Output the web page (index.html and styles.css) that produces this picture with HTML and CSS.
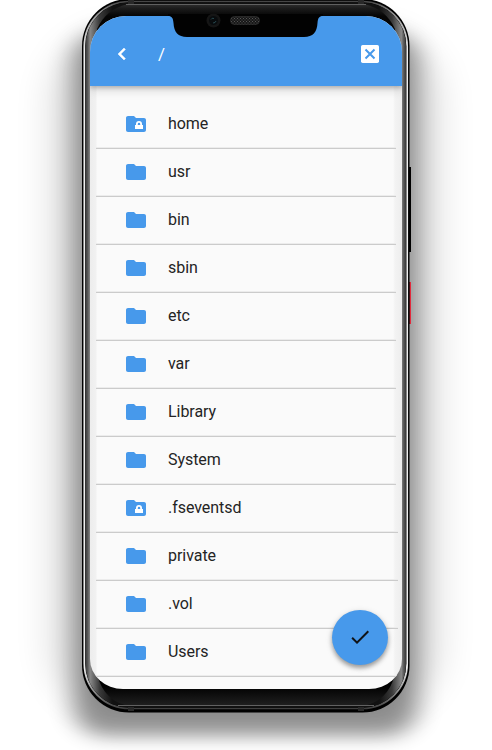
FILE: index.html
```html
<!DOCTYPE html>
<html lang="en">
<head>
<meta charset="utf-8">
<title>Files</title>
<link rel="stylesheet" href="styles.css">
</head>
<body>
<svg width="0" height="0" class="defs">
  <symbol id="folder" viewBox="0 0 24 24"><path d="M10 4H4c-1.100 0-2 .9-2 2v12c0 1.100.9 2 2 2h16c1.100 0 2-.9 2-2V8c0-1.100-.9-2-2-2h-8z"/></symbol>
  <symbol id="lock" viewBox="0 0 24 24"><path d="M10 4H4c-1.100 0-2 .9-2 2v12c0 1.100.9 2 2 2h16c1.100 0 2-.9 2-2V8c0-1.100-.9-2-2-2h-8z"/><path fill="#fff" fill-rule="evenodd" d="M11 17v-4h1v-1a3 3 0 0 1 6 0v1h1v4zM13.800 13h2.400v-1a1.200 1.200 0 0 0-2.400 0z"/></symbol>
</svg>
<div class="phone">
  <svg class="frame" width="492" height="750" viewBox="0 0 492 750">
    <defs>
      <filter id="soft" x="-30%" y="-20%" width="160%" height="140%"><feGaussianBlur stdDeviation="18 16"/></filter>
      <filter id="near" x="-20%" y="-20%" width="140%" height="140%"><feGaussianBlur stdDeviation="13 9"/></filter>
      <linearGradient id="side" x1="85" x2="406.500" y1="0" y2="0" gradientUnits="userSpaceOnUse">
        <stop offset="0" stop-color="#333"/><stop offset=".008" stop-color="#555"/><stop offset=".016" stop-color="#888"/>
        <stop offset=".045" stop-color="#3a3a3a"/><stop offset=".085" stop-color="#111"/><stop offset=".915" stop-color="#111"/>
        <stop offset=".955" stop-color="#3a3a3a"/><stop offset=".984" stop-color="#888"/><stop offset=".992" stop-color="#555"/><stop offset="1" stop-color="#333"/>
      </linearGradient>
      <linearGradient id="rim" x1="0" x2="0" y1="0" y2="711" gradientUnits="userSpaceOnUse">
        <stop offset="0" stop-color="#3c3c3c"/><stop offset=".015" stop-color="#888"/><stop offset=".07" stop-color="#efefef"/>
        <stop offset=".94" stop-color="#efefef"/><stop offset=".98" stop-color="#777"/><stop offset="1" stop-color="#333"/>
      </linearGradient>
      <linearGradient id="bezel" x1="0" x2="0" y1="2" y2="707" gradientUnits="userSpaceOnUse">
        <stop offset="0" stop-color="#383838"/><stop offset=".009" stop-color="#1c1c1c"/><stop offset=".02" stop-color="#050505"/>
        <stop offset=".97" stop-color="#000"/><stop offset="1" stop-color="#222"/>
      </linearGradient>
      <pattern id="mesh" width="3" height="3" patternUnits="userSpaceOnUse"><rect width="3" height="3" fill="#171717"/><path d="M0 0h1v1H0zM1.500 1.500h1v1h-1z" fill="#555"/></pattern>
    </defs>
    <rect x="50" y="30" width="391" height="686" rx="70" fill="#000" opacity=".12" filter="url(#soft)"/>
    <rect x="74" y="32" width="343" height="704" rx="30" fill="#000" opacity=".4" filter="url(#near)"/>
    <path d="M408 167h3v85h-3z" fill="#000"/>
    <path d="M408 282h3v42h-3z" fill="#e22b3d"/><path d="M408 282h1.500v42H408z" fill="#111"/>
    <rect x="82" y="-1" width="327.500" height="713.500" rx="47" fill="#000"/>
    <rect x="84.300" y="1.500" width="322.900" height="707" rx="45" fill="none" stroke="url(#rim)" stroke-width="1.700"/>
    <rect x="85.300" y="2.500" width="320.900" height="705" rx="44" fill="url(#side)"/>
    <path d="M128 4H364Q386 9 395 29V674Q388 702 362 706H130Q104 702 97 674V29Q106 9 128 4z" fill="url(#bezel)"/>
    <path d="M126 4.500H366" stroke="#606060" fill="none"/><path d="M118 705.500H374" stroke="#626262" fill="none"/>
    <path d="M128 0h6v4h-6zM358 0h6v4h-6zM128 707h6v4h-6zM358 707h6v4h-6z" fill="#292929"/>
  </svg>
  <main class="screen">
    <header class="bar">
      <svg class="icon back" viewBox="0 0 24 24"><path d="M15.410 7.410 14 6l-6 6 6 6 1.410-1.410L10.830 12z"/></svg>
      <h1 class="title">/</h1>
      <svg class="icon" viewBox="0 0 24 24"><rect x="3" y="3" width="18" height="18" rx="1.700"/><path class="cross" d="m7.500 7.500 9 9m0-9-9 9"/></svg>
    </header>
    <ul class="list">
      <li><svg><use href="#lock"/></svg>home</li>
      <li><svg><use href="#folder"/></svg>usr</li>
      <li><svg><use href="#folder"/></svg>bin</li>
      <li><svg><use href="#folder"/></svg>sbin</li>
      <li><svg><use href="#folder"/></svg>etc</li>
      <li><svg><use href="#folder"/></svg>var</li>
      <li><svg><use href="#folder"/></svg>Library</li>
      <li><svg><use href="#folder"/></svg>System</li>
      <li class="wide"><svg><use href="#lock"/></svg>.fseventsd</li>
      <li class="wide"><svg><use href="#folder"/></svg>private</li>
      <li class="wide"><svg><use href="#folder"/></svg>.vol</li>
      <li class="wide"><svg><use href="#folder"/></svg>Users</li>
    </ul>
    <button class="fab" aria-label="Confirm"><svg viewBox="0 0 24 24"><path d="M9 16.170 4.830 12l-1.420 1.410L9 19 21 7l-1.410-1.410z"/></svg></button>
  </main>
  <svg class="notch" width="150" height="24" viewBox="170 14 150 24">
    <path d="M168 14V16C172 16 173 18 173.500 23C174 32 178 37 187 37H304C313 37 317 32 317.500 23C318 18 319 16 323 16V14z" fill="#020202"/>
    <circle cx="213.500" cy="20.500" r="7" fill="#151515"/><circle cx="213.500" cy="20.500" r="4.500" fill="#080b0d"/>
    <path d="M211 19.500q1-2 3-1M213 23q2.500 0 3-2" stroke="#35616a" stroke-opacity=".7" fill="none"/>
    <rect x="230.500" y="16.500" width="29" height="8" rx="4" fill="url(#mesh)" stroke="#303030" stroke-width=".7"/>
  </svg>
</div>
</body>
</html>
```
FILE: styles.css
```css
* { box-sizing: border-box; }
body { margin: 0; background: #fff; font-family: Roboto, sans-serif; overflow: hidden; }
.defs { position: absolute; }
.phone { position: relative; width: 492px; height: 750px; padding: 16px 90.500px 61px 90px; }
.frame { position: absolute; left: 0; top: 0; }
.screen {
  position: relative; height: 673px; overflow: hidden;
  border-radius: 36px 36px 33px 33px / 36px 36px 30px 30px;
  background: linear-gradient(90deg, #ededed, #f1f1f1 6px, #fafafa 7px, #fafafa 303px, #f3f3f3 305px, #ededed);
}
.bar {
  position: relative; height: 70px; padding: 6px 19.500px 0 20px;
  display: flex; align-items: center; background: #4799eb; color: #fff;
  box-shadow: 0 2px 4px rgba(0,0,0,.2), 0 4px 10px rgba(0,0,0,.14);
}
.icon { width: 24px; height: 24px; fill: currentColor; }
.back { stroke: currentColor; stroke-width: .5; }
.cross { stroke: #4799eb; stroke-width: 2; }
.title { margin: 0 0 0 24px; flex: 1; font-size: 17px; font-weight: 400; line-height: 24px; }
.list { margin: 0; padding: 15px 0 0 6px; list-style: none; }
.list li {
  width: 300px; height: 48px; padding-left: 28px; display: flex; align-items: center; gap: 20px;
  border-bottom: 1px solid #cbcbcb; box-shadow: inset 0 -1px #ececec;
  color: #242424; font-size: 16px; line-height: 20px; letter-spacing: -.05px; padding-bottom: 1px;
}
.list li.wide { width: 302px; }
.list svg { width: 24px; height: 24px; fill: #4799eb; }
.fab {
  position: absolute; left: 242px; top: 594px; width: 56px; height: 55px; padding: 0 0 1px;
  display: grid; place-items: center; border: 0; border-radius: 50%; background: #4799eb;
  box-shadow: 0 3px 4px rgba(0,0,0,.3), 0 2px 7px rgba(0,0,0,.15);
}
.fab svg { width: 24px; height: 24px; fill: #101418; }
.notch { position: absolute; left: 170px; top: 14px; overflow: visible; }
```
